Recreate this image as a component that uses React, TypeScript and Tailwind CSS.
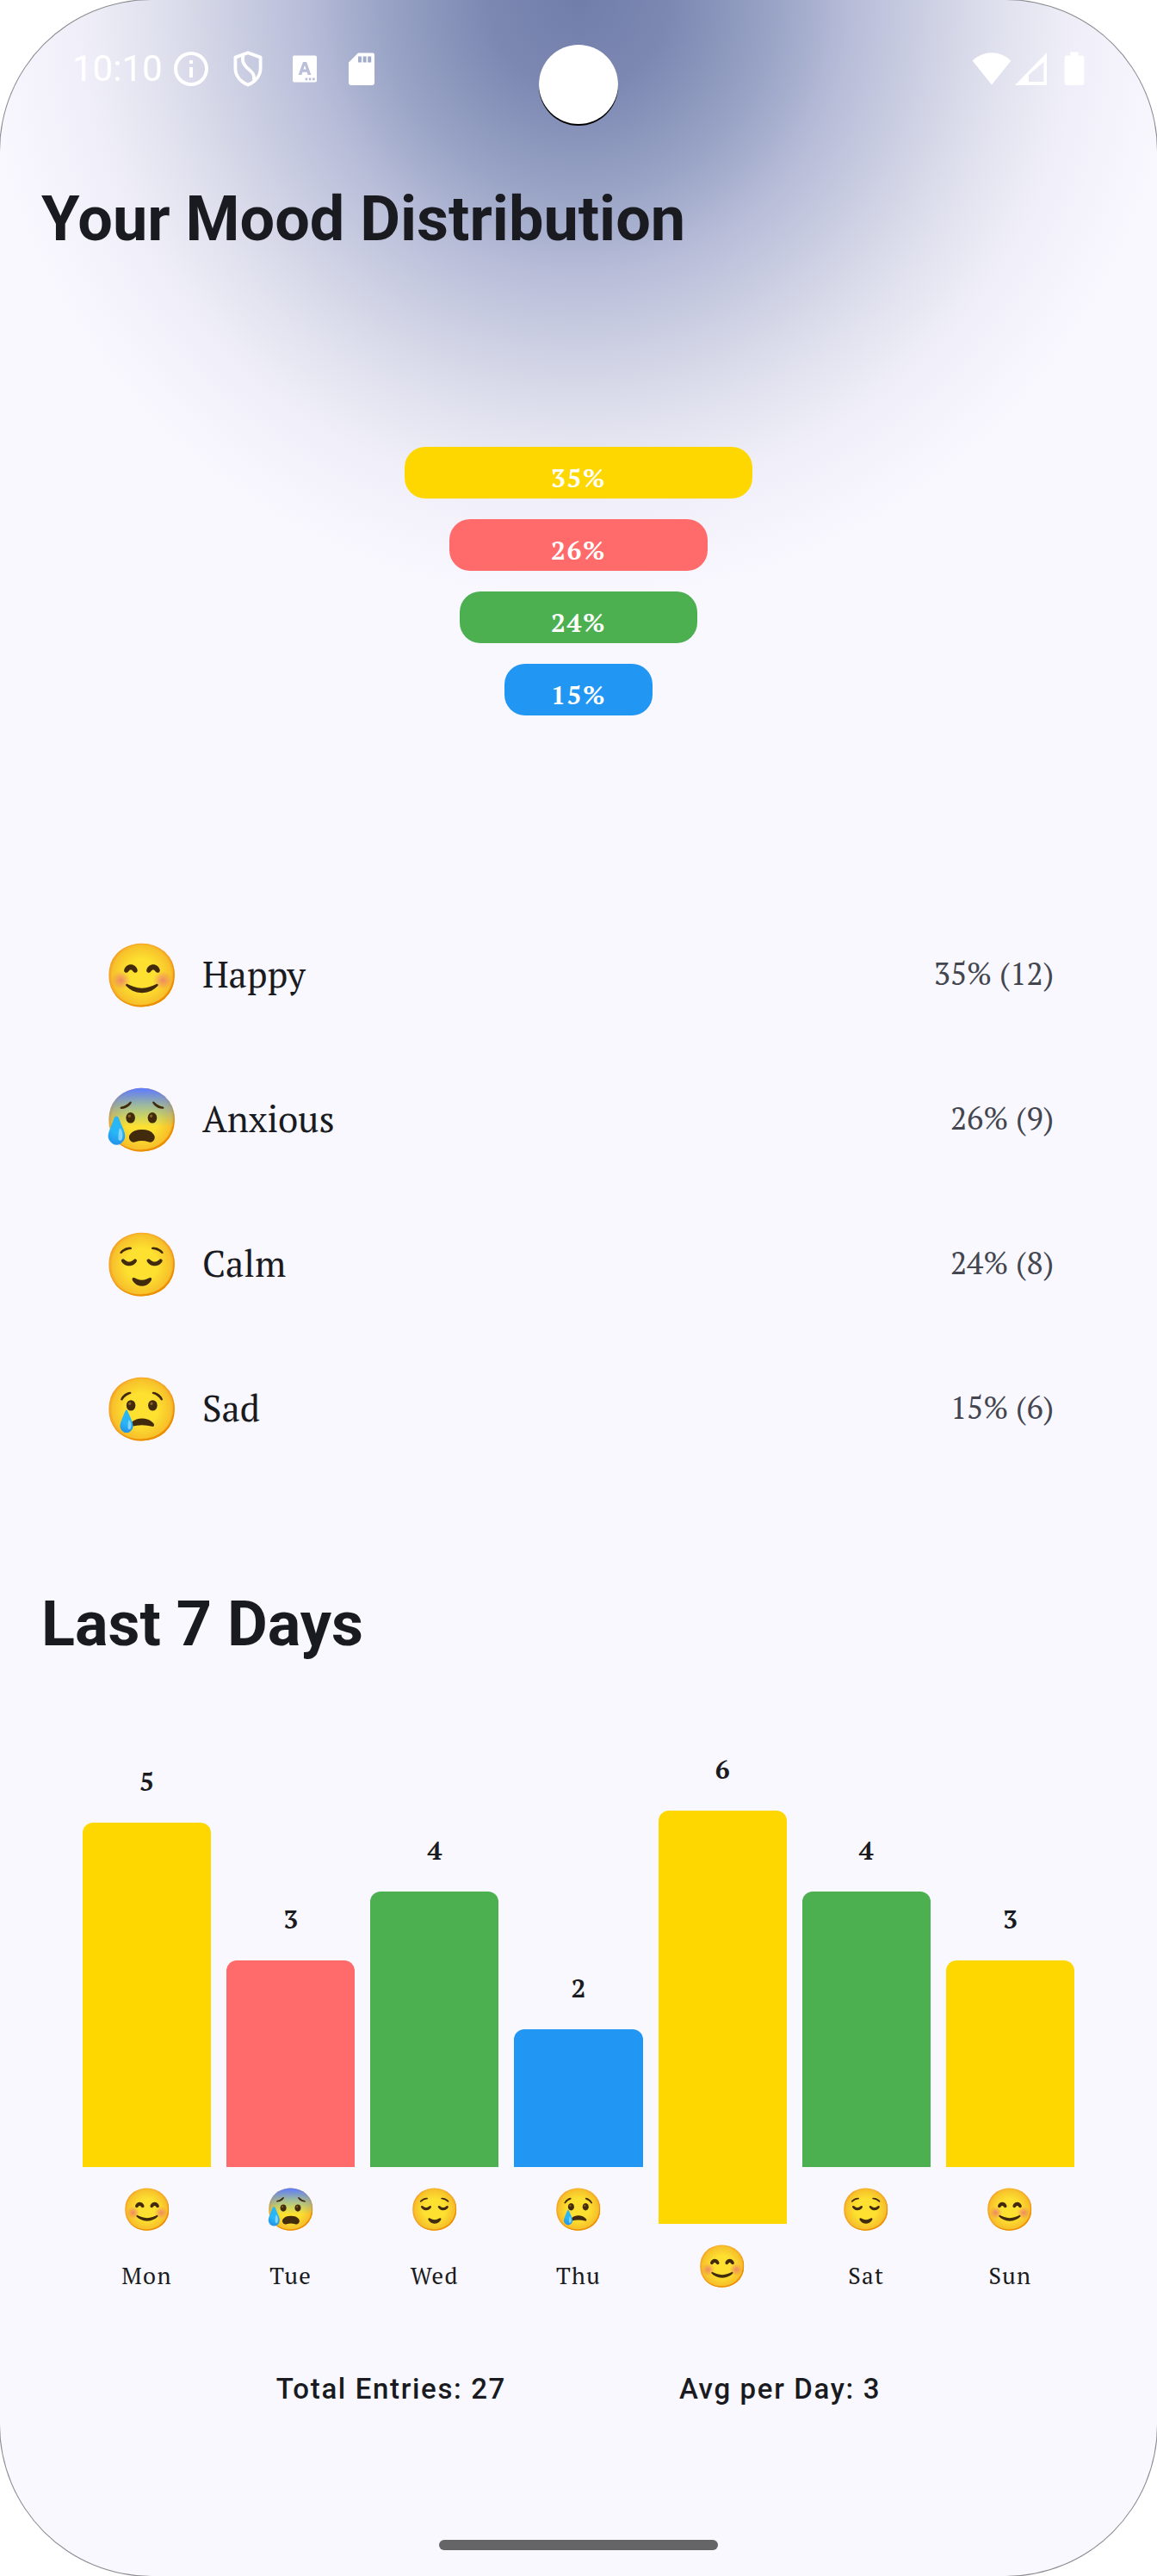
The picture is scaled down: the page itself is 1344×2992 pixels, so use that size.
import type { ReactNode } from "react";

type Mood = "happy" | "anxious" | "calm" | "sad";

const FACE: Record<Mood, string> = { happy: "😊", anxious: "😰", calm: "😌", sad: "😢" };
const FILL: Record<Mood, string> = {
  happy: "bg-[#ffd700]",
  anxious: "bg-[#ff6b6b]",
  calm: "bg-[#4caf50]",
  sad: "bg-[#2196f3]",
};

const MOODS: { mood: Mood; name: string; share: number; count: number }[] = [
  { mood: "happy", name: "Happy", share: 35, count: 12 },
  { mood: "anxious", name: "Anxious", share: 26, count: 9 },
  { mood: "calm", name: "Calm", share: 24, count: 8 },
  { mood: "sad", name: "Sad", share: 15, count: 6 },
];

const DAYS: { day: string; mood: Mood; entries: number; hideLabel?: boolean }[] = [
  { day: "Mon", mood: "happy", entries: 5 },
  { day: "Tue", mood: "anxious", entries: 3 },
  { day: "Wed", mood: "calm", entries: 4 },
  { day: "Thu", mood: "sad", entries: 2 },
  { day: "Fri", mood: "happy", entries: 6, hideLabel: true },
  { day: "Sat", mood: "calm", entries: 4 },
  { day: "Sun", mood: "happy", entries: 3 },
];

const SERIF = "font-['PT_Serif','Liberation_Serif',serif]";

function Icon({ children, className }: { children: ReactNode; className: string }) {
  return (
    <svg viewBox="0 0 24 24" fill="currentColor" className={className} aria-hidden="true">
      {children}
    </svg>
  );
}

function StatusBar() {
  return (
    <header className="relative flex h-[159px] items-center justify-between pr-[72px] pl-[84px] text-white">
      <div className="flex items-center">
        <time className="text-[42px] leading-none">10:10</time>
        <Icon className="ml-[9px] size-12">
          <path fillRule="evenodd" d="M12 2a10 10 0 1 0 0 20 10 10 0 0 0 0-20zm0 18a8 8 0 1 1 0-16 8 8 0 0 1 0 16zM11 7h2v2h-2zm0 4h2v6h-2z" />
        </Icon>
        <Icon className="ml-[18px] size-12">
          <g fill="none" stroke="currentColor" strokeWidth="1.9" strokeLinejoin="round">
            <path d="M12 2.600 19.300 5.300V11.500C19.300 16 16.300 19.500 12 21.300 7.700 19.500 4.700 16 4.700 11.500V5.300z" />
            <path d="M9.300 4.200C8.300 7 9 9 11.300 11.200S16.200 14.600 15.400 18.500" />
          </g>
        </Icon>
        <Icon className="ml-[18px] size-12">
          <path
            fillRule="evenodd"
            d="M6 4.300h12a1 1 0 0 1 1 1v13.500a1 1 0 0 1-1 1H6a1 1 0 0 1-1-1V5.300a1 1 0 0 1 1-1zM8.300 15.500h1.900l.5-1.600h2.600l.5 1.600h1.900L13 8h-2zM11.200 12.300 12 9.900l.8 2.400zM12.300 17.300v1.300h1.300v-1.300zm2.100 0v1.300h1.300v-1.300zm2.100 0v1.300h1.300v-1.300z"
          />
        </Icon>
        <Icon className="ml-[18px] size-12">
          <path fillRule="evenodd" d="M18.500 2.800H10L4.500 8.300v12a1.200 1.200 0 0 0 1.200 1.200h12.600a1.200 1.200 0 0 0 1.200-1.200V3.800a1 1 0 0 0-1-1zM12 8.300h-2V4.800h2zm2.800 0h-2V4.800h2zm2.800 0h-2V4.800h2z" />
        </Icon>
      </div>
      <div className="flex items-center">
        <Icon className="size-12">
          <path d="M12 21.200.8 7.200a16 16 0 0 1 22.400 0z" />
        </Icon>
        <Icon className="size-12">
          <path fillRule="evenodd" d="M20 2.500v19H1.500zM18.200 8 9.500 15.500v4h8.700z" />
        </Icon>
        <Icon className="size-12">
          <path d="M9.700 2.300h4.600v2H16.500A1.200 1.200 0 0 1 17.700 5.500v14.800a1.200 1.200 0 0 1-1.200 1.200h-9a1.200 1.200 0 0 1-1.200-1.200V5.500a1.200 1.200 0 0 1 1.200-1.200h2.200z" />
        </Icon>
      </div>
      <div className="absolute top-[52px] left-1/2 size-[92px] -translate-x-1/2 rounded-full bg-white shadow-[0_2px_0_#000]" />
    </header>
  );
}

function Funnel() {
  return (
    <div className="mt-[216px] flex flex-col items-center gap-6 px-24">
      {MOODS.map(({ mood, share }) => (
        <div
          key={mood}
          className={`flex h-[60px] items-center justify-center rounded-3xl pt-3 ${FILL[mood]}`}
          style={{ width: `${share}%` }}
        >
          <span className={`${SERIF} text-[30px] leading-none font-bold tracking-wider text-white`}>{share}%</span>
        </div>
      ))}
    </div>
  );
}

function MoodList() {
  return (
    <ul className="mt-[216px] flex flex-col px-[120px]">
      {MOODS.map(({ mood, name, share, count }) => (
        <li key={mood} className={`flex h-[168px] items-center ${SERIF}`}>
          <span className="w-[115px] text-[72px] leading-none">{FACE[mood]}</span>
          <span className="flex-1 text-[42px] text-[#1a1b20]">{name}</span>
          <span className="text-[36px] text-[#44464f]">
            {share}% ({count})
          </span>
        </li>
      ))}
    </ul>
  );
}

function WeekChart() {
  return (
    <div className="mt-[72px] flex items-end gap-[18px] px-24">
      {DAYS.map(({ day, mood, entries, hideLabel }) => (
        <div key={day} className={`flex flex-1 flex-col items-center text-[#1a1b20] ${SERIF}`}>
          <span className="flex h-24 items-center text-[30px] leading-none font-bold">{entries}</span>
          <div className={`w-full rounded-t-xl ${FILL[mood]}`} style={{ height: entries * 80 }} />
          <span className="flex h-[98px] items-center pb-0.5 text-[48px] leading-none">{FACE[mood]}</span>
          {!hideLabel && <span className="h-[66px] text-[27px] leading-[56px] tracking-wider">{day}</span>}
        </div>
      ))}
    </div>
  );
}

export default function App() {
  return (
    <div className="bg-white font-[Roboto,sans-serif]">
      <main className="flex min-h-screen flex-col rounded-[176px] bg-[#f9f8ff] bg-[radial-gradient(circle_700px_at_50%_0,#717eaa_0%,#7c88b2_15%,#98a3c5_32%,#b7bcd8_45%,#cdd0e3_58%,#e0e1ee_70%,#f0eff9_83%,#f9f8ff_100%)] shadow-[0_0_0_1px_#8a8a90]">
        <StatusBar />
        <h1 className="mt-12 px-12 text-[72px] leading-[96px] font-bold text-[#1a1b20]">Your Mood Distribution</h1>
        <Funnel />
        <MoodList />
        <h2 className="mt-[120px] px-12 text-[72px] leading-[96px] font-bold text-[#1a1b20]">Last 7 Days</h2>
        <WeekChart />
        <div className="mt-[70px] flex justify-evenly px-[120px] text-[33px] leading-12 font-medium tracking-wider text-[#1a1b20]">
          <p>Total Entries: 27</p>
          <p>Avg per Day: 3</p>
        </div>
        <div className="mx-auto mt-auto mb-[30px] h-3 w-[324px] rounded-full bg-[#656466]" />
      </main>
    </div>
  );
}
